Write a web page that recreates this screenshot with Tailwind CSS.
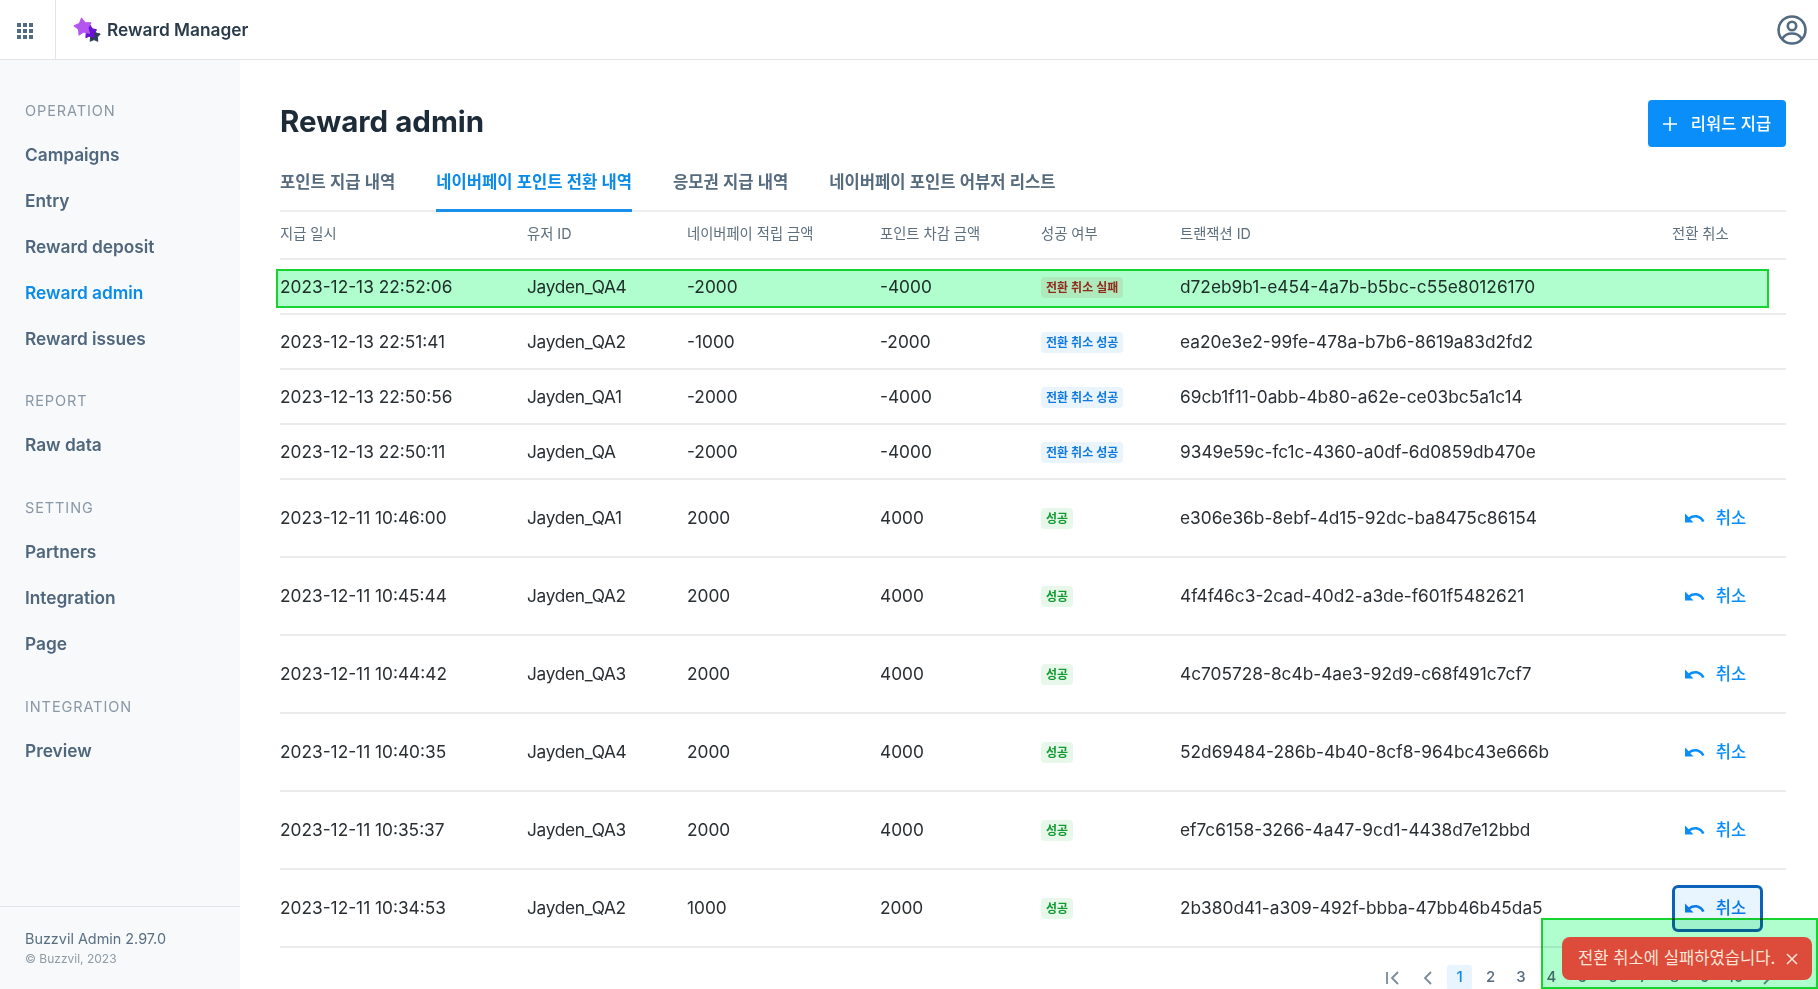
<!doctype html>
<html lang="ko">
<head>
<meta charset="utf-8">
<script src="https://cdn.jsdelivr.net/npm/@tailwindcss/browser@4"></script>
<title>Reward Manager</title>
</head>
<body class="h-[989px] overflow-hidden bg-white font-['Inter','Noto_Sans_CJK_KR',sans-serif] text-[#1f2d3a]">
<div class="relative h-[989px] w-full overflow-hidden">
  <header class="flex h-[60px] items-center border-b border-[#e2e4e6] bg-white">
    <div class="flex h-full w-[56px] items-center justify-center border-r border-[#e2e4e6] pr-[6px] pt-[2px]">
      <svg width="16" height="16" viewBox="0 0 16 16" fill="#536b80"><rect x="0" y="0" width="4" height="4"/><rect x="6" y="0" width="4" height="4"/><rect x="12" y="0" width="4" height="4"/><rect x="0" y="6" width="4" height="4"/><rect x="6" y="6" width="4" height="4"/><rect x="12" y="6" width="4" height="4"/><rect x="0" y="12" width="4" height="4"/><rect x="6" y="12" width="4" height="4"/><rect x="12" y="12" width="4" height="4"/></svg>
    </div>
    <svg class="ml-[17px] mt-[2px]" width="28" height="28" viewBox="0 0 28 28" stroke-linejoin="round"><polygon points="21,12.500 23.100,16.100 27.200,17 24.400,20.100 24.800,24.300 21,22.600 17.200,24.300 17.600,20.100 14.800,17 18.900,16.100" fill="#2d3f55" stroke="#2d3f55"/><polygon points="17,8 19.350,11.760 23.660,12.840 20.800,16.240 21.110,20.660 17,19 12.890,20.660 13.200,16.240 10.340,12.840 14.650,11.760" fill="#6a12d8" stroke="#6a12d8"/><polygon transform="rotate(-10 10 10)" points="10,1 12.900,5.950 18.600,7.200 14.760,11.550 15.300,17.300 10,15 4.700,17.300 5.240,11.550 1.400,7.200 7.060,5.950" fill="#b455f0" stroke="#b455f0"/></svg>
    <span class="ml-[6px] text-[17.300px] font-semibold text-[#2a3a4a]">Reward Manager</span>
    <svg class="ml-auto mr-[10px]" width="32" height="32" viewBox="0 0 32 32" fill="none" stroke="#536b80" stroke-width="2.600"><circle cx="16" cy="16" r="13.500"/><circle cx="16" cy="12" r="4.200"/><path d="M6.500 24.500c2-3.500 5.500-5 9.500-5s7.500 1.500 9.500 5"/></svg>
  </header>

  <div class="flex h-[929px]">
    <aside class="flex w-[240px] shrink-0 flex-col bg-[#f7f9fb]">
      <nav class="flex-1 pl-[25px] pt-[41px] text-[17.300px] font-semibold text-[#4f667c]">
        <p class="h-[20px] text-[14.500px] leading-[20px] font-normal tracking-[0.9px] text-[#8a98a5]">OPERATION</p>
        <div class="mt-[11px] flex h-[46px] items-center">Campaigns</div>
        <div class="flex h-[46px] items-center">Entry</div>
        <div class="flex h-[46px] items-center">Reward deposit</div>
        <div class="flex h-[46px] items-center text-[#0b8be8]">Reward admin</div>
        <div class="flex h-[46px] items-center">Reward issues</div>
        <p class="mt-[29px] h-[20px] text-[14.500px] leading-[20px] font-normal tracking-[0.9px] text-[#8a98a5]">REPORT</p>
        <div class="mt-[11px] flex h-[46px] items-center">Raw data</div>
        <p class="mt-[30px] h-[20px] text-[14.500px] leading-[20px] font-normal tracking-[0.9px] text-[#8a98a5]">SETTING</p>
        <div class="mt-[11px] flex h-[46px] items-center">Partners</div>
        <div class="flex h-[46px] items-center">Integration</div>
        <div class="flex h-[46px] items-center">Page</div>
        <p class="mt-[30px] h-[20px] text-[14.500px] leading-[20px] font-normal tracking-[0.9px] text-[#8a98a5]">INTEGRATION</p>
        <div class="mt-[11px] flex h-[46px] items-center">Preview</div>
      </nav>
      <footer class="h-[83px] border-t border-[#e2e5e8] pl-[25px] pt-[22px]">
        <p class="text-[14.400px] leading-[20px] text-[#5a6f82]">Buzzvil Admin 2.97.0</p>
        <p class="mt-[2px] text-[12px] leading-[16px] text-[#8f9ba6]">© Buzzvil, 2023</p>
      </footer>
    </aside>

    <main class="relative flex-1 pl-[40px] pr-[32px]">
      <div class="flex h-[90px] items-start justify-between">
        <h1 class="mt-[43px] text-[29.500px] leading-[36px] font-bold text-[#1d2b38]">Reward admin</h1>
        <button class="mt-[40px] flex h-[47px] w-[138px] items-center justify-center gap-[14px] rounded-[4px] bg-[#0a8ffa] pt-[1px] text-[16.500px] font-medium text-white">
          <svg width="14" height="14" viewBox="0 0 14 14" stroke="white" stroke-width="1.600"><path d="M7 0v14M0 7h14"/></svg>리워드 지급
        </button>
      </div>
      <div class="flex h-[62px] gap-[41px] border-b-2 border-[#eceef0] text-[16.600px] font-semibold text-[#566b7e]">
        <div class="h-[62px] pt-[22px] leading-[21px]">포인트 지급 내역</div>
        <div class="h-[62px] border-b-[3px] border-[#1a90ea] pt-[22px] leading-[21px] text-[#0b8be8]">네이버페이 포인트 전환 내역</div>
        <div class="h-[62px] pt-[22px] leading-[21px]">응모권 지급 내역</div>
        <div class="h-[62px] pt-[22px] leading-[21px]">네이버페이 포인트 어뷰저 리스트</div>
      </div>

      <table class="w-full table-fixed border-collapse text-[17.300px] text-[#2a2f33]">
        <colgroup><col class="w-[247px]"><col class="w-[160px]"><col class="w-[193px]"><col class="w-[161px]"><col class="w-[139px]"><col class="w-[492px]"><col></colgroup>
        <thead class="text-left text-[14.300px] text-[#5d6e7d]">
          <tr class="h-[47px] border-b-2 border-[#e9ebed]">
            <th class="pb-[2px] font-normal">지급 일시</th><th class="pb-[2px] font-normal">유저 ID</th><th class="pb-[2px] font-normal">네이버페이 적립 금액</th><th class="pb-[2px] font-normal">포인트 차감 금액</th><th class="pb-[2px] font-normal">성공 여부</th><th class="pb-[2px] font-normal">트랜잭션 ID</th><th class="pb-[2px] font-normal">전환 취소</th>
          </tr>
        </thead>
        <tbody>
          <tr class="h-[55px] border-b-2 border-[#e9ebed]"><td>2023-12-13 22:52:06</td><td class="tracking-[-0.3px]">Jayden_QA4</td><td>-2000</td><td>-4000</td><td><span class="relative -top-[1px] rounded-[4px] bg-[#fdecea] px-[5px] py-[3px] text-[12px] font-semibold text-[#cf2a22]">전환 취소 실패</span></td><td>d72eb9b1-e454-4a7b-b5bc-c55e80126170</td><td></td></tr>
          <tr class="h-[55px] border-b-2 border-[#e9ebed]"><td>2023-12-13 22:51:41</td><td class="tracking-[-0.3px]">Jayden_QA2</td><td>-1000</td><td>-2000</td><td><span class="relative -top-[1px] rounded-[4px] bg-[#eaf4fd] px-[5px] py-[3px] text-[12px] font-semibold text-[#1079e0]">전환 취소 성공</span></td><td>ea20e3e2-99fe-478a-b7b6-8619a83d2fd2</td><td></td></tr>
          <tr class="h-[55px] border-b-2 border-[#e9ebed]"><td>2023-12-13 22:50:56</td><td class="tracking-[-0.3px]">Jayden_QA1</td><td>-2000</td><td>-4000</td><td><span class="relative -top-[1px] rounded-[4px] bg-[#eaf4fd] px-[5px] py-[3px] text-[12px] font-semibold text-[#1079e0]">전환 취소 성공</span></td><td>69cb1f11-0abb-4b80-a62e-ce03bc5a1c14</td><td></td></tr>
          <tr class="h-[55px] border-b-2 border-[#e9ebed]"><td>2023-12-13 22:50:11</td><td class="tracking-[-0.3px]">Jayden_QA</td><td>-2000</td><td>-4000</td><td><span class="relative -top-[1px] rounded-[4px] bg-[#eaf4fd] px-[5px] py-[3px] text-[12px] font-semibold text-[#1079e0]">전환 취소 성공</span></td><td>9349e59c-fc1c-4360-a0df-6d0859db470e</td><td></td></tr>

          <tr class="h-[78px] border-b-2 border-[#e9ebed]"><td>2023-12-11 10:46:00</td><td class="tracking-[-0.3px]">Jayden_QA1</td><td>2000</td><td>4000</td><td><span class="relative -top-[1px] rounded-[4px] bg-[#e7f8ea] px-[5px] py-[3px] text-[12px] font-semibold text-[#149a33]">성공</span></td><td>e306e36b-8ebf-4d15-92dc-ba8475c86154</td><td><div class="flex h-[47px] w-[91px] items-center justify-center gap-[11px] pr-[4px] text-[16.500px] font-medium text-[#0a8ffa]"><svg width="20" height="14" viewBox="0 0 20 14" fill="currentColor"><path d="M0 2.500v9h8.500L5.300 8.300C6.700 7.200 8.300 6.500 10.200 6.500c3 0 5.700 1.700 6.900 4.500l2.400-.8C18 6.500 14.400 4 10.200 4 7.800 4 5.600 4.800 3.800 6.300z"/></svg><span>취소</span></div></td></tr>
          <tr class="h-[78px] border-b-2 border-[#e9ebed]"><td>2023-12-11 10:45:44</td><td class="tracking-[-0.3px]">Jayden_QA2</td><td>2000</td><td>4000</td><td><span class="relative -top-[1px] rounded-[4px] bg-[#e7f8ea] px-[5px] py-[3px] text-[12px] font-semibold text-[#149a33]">성공</span></td><td>4f4f46c3-2cad-40d2-a3de-f601f5482621</td><td><div class="flex h-[47px] w-[91px] items-center justify-center gap-[11px] pr-[4px] text-[16.500px] font-medium text-[#0a8ffa]"><svg width="20" height="14" viewBox="0 0 20 14" fill="currentColor"><path d="M0 2.500v9h8.500L5.300 8.300C6.700 7.200 8.300 6.500 10.200 6.500c3 0 5.700 1.700 6.900 4.500l2.400-.8C18 6.500 14.400 4 10.200 4 7.800 4 5.600 4.800 3.800 6.300z"/></svg><span>취소</span></div></td></tr>
          <tr class="h-[78px] border-b-2 border-[#e9ebed]"><td>2023-12-11 10:44:42</td><td class="tracking-[-0.3px]">Jayden_QA3</td><td>2000</td><td>4000</td><td><span class="relative -top-[1px] rounded-[4px] bg-[#e7f8ea] px-[5px] py-[3px] text-[12px] font-semibold text-[#149a33]">성공</span></td><td>4c705728-8c4b-4ae3-92d9-c68f491c7cf7</td><td><div class="flex h-[47px] w-[91px] items-center justify-center gap-[11px] pr-[4px] text-[16.500px] font-medium text-[#0a8ffa]"><svg width="20" height="14" viewBox="0 0 20 14" fill="currentColor"><path d="M0 2.500v9h8.500L5.300 8.300C6.700 7.200 8.300 6.500 10.200 6.500c3 0 5.700 1.700 6.900 4.500l2.400-.8C18 6.500 14.400 4 10.200 4 7.800 4 5.600 4.800 3.800 6.300z"/></svg><span>취소</span></div></td></tr>
          <tr class="h-[78px] border-b-2 border-[#e9ebed]"><td>2023-12-11 10:40:35</td><td class="tracking-[-0.3px]">Jayden_QA4</td><td>2000</td><td>4000</td><td><span class="relative -top-[1px] rounded-[4px] bg-[#e7f8ea] px-[5px] py-[3px] text-[12px] font-semibold text-[#149a33]">성공</span></td><td>52d69484-286b-4b40-8cf8-964bc43e666b</td><td><div class="flex h-[47px] w-[91px] items-center justify-center gap-[11px] pr-[4px] text-[16.500px] font-medium text-[#0a8ffa]"><svg width="20" height="14" viewBox="0 0 20 14" fill="currentColor"><path d="M0 2.500v9h8.500L5.300 8.300C6.700 7.200 8.300 6.500 10.200 6.500c3 0 5.700 1.700 6.900 4.500l2.400-.8C18 6.500 14.400 4 10.200 4 7.800 4 5.600 4.800 3.800 6.300z"/></svg><span>취소</span></div></td></tr>
          <tr class="h-[78px] border-b-2 border-[#e9ebed]"><td>2023-12-11 10:35:37</td><td class="tracking-[-0.3px]">Jayden_QA3</td><td>2000</td><td>4000</td><td><span class="relative -top-[1px] rounded-[4px] bg-[#e7f8ea] px-[5px] py-[3px] text-[12px] font-semibold text-[#149a33]">성공</span></td><td>ef7c6158-3266-4a47-9cd1-4438d7e12bbd</td><td><div class="flex h-[47px] w-[91px] items-center justify-center gap-[11px] pr-[4px] text-[16.500px] font-medium text-[#0a8ffa]"><svg width="20" height="14" viewBox="0 0 20 14" fill="currentColor"><path d="M0 2.500v9h8.500L5.300 8.300C6.700 7.200 8.300 6.500 10.200 6.500c3 0 5.700 1.700 6.900 4.500l2.400-.8C18 6.500 14.400 4 10.200 4 7.800 4 5.600 4.800 3.800 6.300z"/></svg><span>취소</span></div></td></tr>
          <tr class="h-[78px] border-b-2 border-[#e9ebed]"><td>2023-12-11 10:34:53</td><td class="tracking-[-0.3px]">Jayden_QA2</td><td>1000</td><td>2000</td><td><span class="relative -top-[1px] rounded-[4px] bg-[#e7f8ea] px-[5px] py-[3px] text-[12px] font-semibold text-[#149a33]">성공</span></td><td>2b380d41-a309-492f-bbba-47bb46b45da5</td><td><div class="flex h-[47px] w-[91px] items-center justify-center gap-[11px] rounded-[6px] border-[3px] border-[#0a63b8] bg-[#e8f4fe] pr-[4px] text-[16.500px] font-medium text-[#0a7ae8]"><svg width="20" height="14" viewBox="0 0 20 14" fill="currentColor"><path d="M0 2.500v9h8.500L5.300 8.300C6.700 7.200 8.300 6.500 10.200 6.500c3 0 5.700 1.700 6.900 4.500l2.400-.8C18 6.500 14.400 4 10.200 4 7.800 4 5.600 4.800 3.800 6.300z"/></svg><span>취소</span></div></td></tr>
        </tbody>
      </table>

      <div class="mt-[17px] flex items-center justify-end pr-[3px] text-[15px] font-medium text-[#566b7e]">
        <span class="flex h-[25px] w-[34px] items-center justify-center"><svg width="14" height="14" viewBox="0 0 14 14" fill="none" stroke="#7a8a98" stroke-width="1.800"><path d="M1 1v12M12 1L6 7l6 6"/></svg></span>
        <span class="flex h-[25px] w-[34px] items-center justify-center"><svg width="9" height="14" viewBox="0 0 9 14" fill="none" stroke="#7a8a98" stroke-width="1.800"><path d="M8 1L2 7l6 6"/></svg></span>
        <span class="mx-[3px] flex h-[25px] w-[25px] items-center justify-center rounded-[3px] bg-[#e8f4fe] text-[#0b8be8]">1</span>
        <span class="flex h-[25px] w-[31px] items-center justify-center">2</span>
        <span class="flex h-[25px] w-[30px] items-center justify-center">3</span>
        <span class="flex h-[25px] w-[31px] items-center justify-center">4</span>
        <span class="flex h-[25px] w-[31px] items-center justify-center">5</span>
        <span class="flex h-[25px] w-[30px] items-center justify-center">6</span>
        <span class="flex h-[25px] w-[31px] items-center justify-center">7</span>
        <span class="flex h-[25px] w-[31px] items-center justify-center">8</span>
        <span class="flex h-[25px] w-[30px] items-center justify-center">9</span>
        <span class="flex h-[25px] w-[31px] items-center justify-center">10</span>
        <span class="flex h-[25px] w-[32px] items-center justify-center"><svg width="9" height="14" viewBox="0 0 9 14" fill="none" stroke="#7a8a98" stroke-width="1.800"><path d="M1 1l6 6-6 6"/></svg></span>
      </div>
    </main>
  </div>

  <div class="absolute left-[276px] top-[269px] h-[39px] w-[1493px] border-2 border-[#17d32f] bg-[#b0fdcd] mix-blend-multiply"></div>
  <div class="absolute left-[1541px] top-[918px] h-[71px] w-[277px] border-2 border-[#17d32f] bg-[#b0fdcd] mix-blend-multiply"></div>
  <div class="absolute left-[1562px] top-[937px] flex h-[43px] w-[250px] items-center justify-between rounded-[8px] bg-[#dd4b3b] pl-[16px] pr-[14px] text-[16.600px] text-[#fbe6d8]">
    <span>전환 취소에 실패하였습니다.</span>
    <svg width="12" height="12" viewBox="0 0 12 12" stroke="#fbe6d8" stroke-width="1.500"><path d="M1 1l10 10M11 1L1 11"/></svg>
  </div>
</div>
</body>
</html>
